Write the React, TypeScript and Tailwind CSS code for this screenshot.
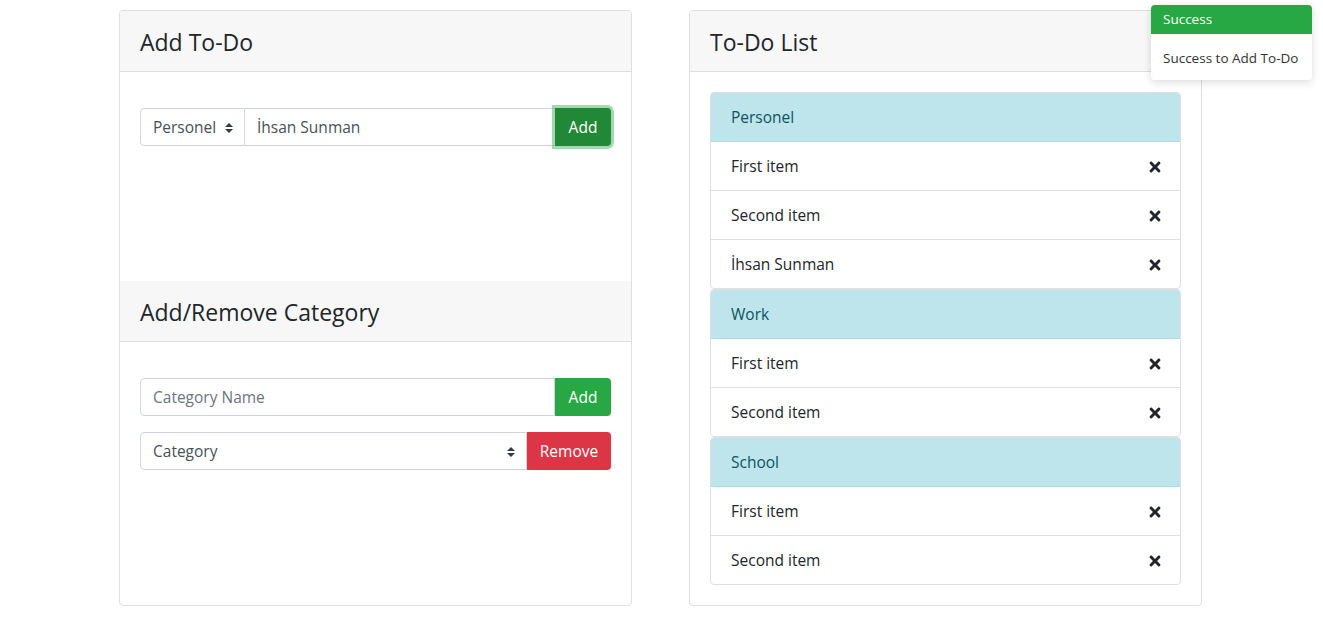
import { FaTimes } from "react-icons/fa";

const font = { fontFamily: '"Open Sans", "Noto Sans", sans-serif' };

function Caret() {
  return (
    <svg width="8" height="10" viewBox="0 0 8 10" className="shrink-0">
      <path d="M4 0 L8 4 L0 4 Z M0 6 L8 6 L4 10 Z" fill="#343a40" />
    </svg>
  );
}

function CardHeader({ title }: { title: string }) {
  return (
    <div className="h-[61px] flex items-center px-5 pt-[3px] bg-[#f7f7f7] border-b border-[#dfdfdf]">
      <h3 className="text-[23px] text-[#212529] leading-none">{title}</h3>
    </div>
  );
}

const groups = [
  { name: "Personel", items: ["First item", "Second item", "İhsan Sunman"] },
  { name: "Work", items: ["First item", "Second item"] },
  { name: "School", items: ["First item", "Second item"] },
];

export default function App() {
  return (
    <div className="relative w-[1323px] h-[619px] bg-white text-[#212529]" style={font}>
      <div className="flex gap-[57px] pl-[119px] pt-[10px]">
        {/* left card */}
        <div className="w-[513px] h-[596px] border border-[#dfdfdf] rounded-[4px] flex flex-col overflow-hidden">
          <CardHeader title="Add To-Do" />
          <div className="h-[209px] px-5 pt-[36px]">
            <div className="flex h-[38px] text-[15.5px]">
              <div className="w-[105px] flex items-center justify-between pl-3 pr-[11px] pt-[1px] border border-[#ced4da] rounded-l-[4px] text-[#495057]">
                <span>Personel</span>
                <Caret />
              </div>
              <div className="flex-1 flex items-center px-3 pt-[1px] border-y border-[#ced4da] text-[#495057]">
                İhsan Sunman
              </div>
              <div className="w-[56px] flex items-center justify-center pt-[1px] bg-[#218838] text-white rounded-r-[4px] shadow-[0_0_0_3px_rgba(72,180,97,0.5)]">
                Add
              </div>
            </div>
          </div>
          <CardHeader title="Add/Remove Category" />
          <div className="px-5 pt-[36px] flex flex-col gap-4 text-[15.5px]">
            <div className="flex h-[38px]">
              <div className="flex-1 flex items-center px-3 pt-[1px] border border-[#ced4da] rounded-l-[4px] text-[#6c757d]">
                Category Name
              </div>
              <div className="w-[56px] flex items-center justify-center pt-[1px] bg-[#28a745] text-white rounded-r-[4px]">
                Add
              </div>
            </div>
            <div className="flex h-[38px]">
              <div className="flex-1 flex items-center justify-between pl-3 pr-[11px] pt-[1px] border border-[#ced4da] rounded-l-[4px] text-[#495057]">
                <span>Category</span>
                <Caret />
              </div>
              <div className="w-[84px] flex items-center justify-center pt-[1px] bg-[#dc3545] text-white rounded-r-[4px]">
                Remove
              </div>
            </div>
          </div>
        </div>

        {/* right card */}
        <div className="w-[513px] h-[596px] border border-[#dfdfdf] rounded-[4px] flex flex-col overflow-hidden">
          <CardHeader title="To-Do List" />
          <div className="px-5 pt-5 text-[15.5px]">
            {groups.map((g) => (
              <div key={g.name} className="rounded-[4px] border border-[#dfdfdf] overflow-hidden">
                <div className="h-[49px] flex items-center px-5 pt-[2px] bg-[#bee5eb] border-b border-[#abdde5] text-[#0c5460]">
                  {g.name}
                </div>
                {g.items.map((it, i) => (
                  <div
                    key={i}
                    className={`flex items-center justify-between pl-5 pr-[17px] pt-[2px] ${
                      i < g.items.length - 1 ? "h-[49px] border-b border-[#dfdfdf]" : "h-[48px]"
                    }`}
                  >
                    <span>{it}</span>
                    <FaTimes size={16} className="text-[#212529]" />
                  </div>
                ))}
              </div>
            ))}
          </div>
        </div>
      </div>

      {/* toast */}
      <div className="absolute left-[1151px] top-[5px] w-[161px] rounded-[4px] bg-white shadow-[0_2px_8px_rgba(0,0,0,0.15)] overflow-hidden">
        <div className="h-[29px] flex items-center px-3 bg-[#28a745] text-white text-[13.5px]">Success</div>
        <div className="h-[46px] flex items-center px-3 pt-[2px] text-[13.5px] text-[#333]">Success to Add To-Do</div>
      </div>
    </div>
  );
}
